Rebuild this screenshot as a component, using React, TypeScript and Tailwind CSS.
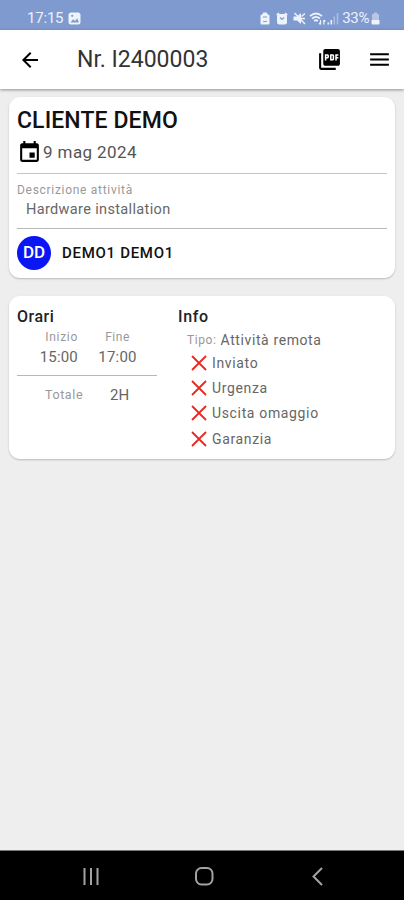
import React from 'react';
import { MdArrowBack, MdEvent, MdMenu, MdPictureAsPdf } from 'react-icons/md';

const flags = ['Inviato', 'Urgenza', 'Uscita omaggio', 'Garanzia'];

const StatusBar: React.FC = () => (
    <div className="h-[30px] shrink-0 bg-[#7f9acf] text-[#edf2fc] flex items-center pl-[27px] pr-[24px] pt-[7px]">
        <span className="text-[15px] leading-none tracking-[-0.2px]">17:15</span>
        <svg className="w-[13px] h-[13px] ml-[5px]" viewBox="0 0 13 13">
            <rect x="0.5" y="0.5" width="12" height="12" rx="2.5" fill="currentColor" />
            <path d="M2.5 10.5l2.6-3.2 2 1.7 2.2-2.8 1.6 4.3z" fill="#7f9acf" />
            <circle cx="4.2" cy="3.8" r="1.1" fill="#7f9acf" />
        </svg>

        <div className="ml-auto flex items-center">
            {/* Risparmio, sveglia, muto */}
            <svg className="w-[10px] h-[13px]" viewBox="0 0 10 13">
                <path d="M3 0.5h4v1l2.500 2v8q0 1-1 1h-7q-1 0-1-1v-8l2.500-2z" fill="currentColor" />
                <path d="M3 5h4M3.200 9.500h3.600" stroke="#7f9acf" />
            </svg>
            <svg className="w-[12px] h-[13px] ml-[6px]" viewBox="0 0 12 13">
                <path d="M0.8 3.2l2.2-2M11.2 3.2l-2.2-2" stroke="currentColor" strokeWidth="1.6" />
                <rect x="1" y="2" width="10" height="10.5" rx="2.5" fill="currentColor" />
                <path d="M4 5.5l2 2 2.2-2.2" fill="none" stroke="#7f9acf" strokeWidth="1.2" />
            </svg>
            <svg className="w-[13px] h-[13px] ml-[5px]" viewBox="0 0 13 13">
                <path d="M0.5 4.500h3.500l4-3.500v11l-4-3.500h-3.500z" fill="currentColor" />
                <path d="M1.5 1l10.500 11M8 6.500h4M8.500 4.500l3.500-3" stroke="currentColor" strokeWidth="1.5" />
            </svg>
            <svg className="w-[17px] h-[13px] ml-[3px]" viewBox="0 0 17 13" fill="none" stroke="currentColor" strokeWidth="1.7">
                <path d="M1 4.2q6-5.4 12 0M3 6.7q4-3.5 8 0M5.2 9q1.8-1.5 3.6 0" />
                <path d="M11.5 8v4.5M10 11l1.5 1.5M14.8 12.5v-4.5M16.3 9.5l-1.5-1.5" strokeWidth="1.2" />
            </svg>
            <svg className="w-[12px] h-[13px] ml-[1px]" viewBox="0 0 12 13" fill="currentColor">
                <path d="M0.5 10.5h1.6v2h-1.6zM3.5 8h1.6v4.5h-1.6z" />
                <path d="M6.5 4.5h1.6v8h-1.6zM9.7 1h1.6v11.5h-1.6z" opacity="0.4" />
            </svg>
            <span className="text-[15px] leading-none ml-[3px] tracking-[-0.4px]">33%</span>
            <svg className="w-[9px] h-[13px] ml-[2px]" viewBox="0 0 9 13" fill="currentColor">
                <path d="M2.8 0.5h3.4v1.5h1.8v6h-7v-6h1.8z" opacity="0.5" />
                <path d="M0.5 8h8v3.5q0 1-1 1h-6q-1 0-1-1z" />
            </svg>
        </div>
    </div>
);

const Cross: React.FC = () => (
    <svg className="w-[16px] h-[16px]" viewBox="0 0 16 16">
        <path d="M1 1l14 14M15 1l-14 14" stroke="#e8281e" strokeWidth="1.8" />
    </svg>
);

const App: React.FC = () => {
    return (
        <div className="w-[404px] h-[900px] flex flex-col bg-[#eeeeee] font-['Roboto',sans-serif] overflow-hidden whitespace-nowrap">
            <StatusBar />

            <header className="h-[59px] shrink-0 bg-white flex items-center pl-[18px] pr-[12px] shadow-[0_1px_3px_rgba(0,0,0,0.4)]">
                <MdArrowBack className="w-[24px] h-[24px] text-black" />
                <h1 className="ml-[35px] text-[23px] leading-none text-[#333333]">Nr. I2400003</h1>
                <MdPictureAsPdf className="ml-auto w-[25px] h-[25px] text-black" />
                <MdMenu className="ml-[25px] w-[25px] h-[25px] text-black" />
            </header>

            <main className="flex-1 px-[9px] pt-[8px]">
                <section className="h-[181px] bg-white rounded-[11px] px-[8px] pt-[10px] shadow-[0_1px_2px_rgba(0,0,0,0.22)]">
                    <h2 className="h-[28px] text-[23px] leading-[28px] font-medium text-[#111111] tracking-[0.1px]">CLIENTE DEMO</h2>
                    <div className="h-[39px] flex items-center border-b border-[#c4c4c4] pb-[4px]">
                        <MdEvent className="w-[25px] h-[25px] text-black" />
                        <span className="ml-px text-[17px] leading-none text-[#555555] tracking-[0.4px]">9 mag 2024</span>
                    </div>
                    <div className="h-[55px] border-b border-[#b8b8b8] pt-[9px] pr-px">
                        <div className="text-[12px] leading-[15px] text-[#999999] tracking-[0.7px]">Descrizione attività</div>
                        <div className="pl-[9px] pt-[2px] text-[14.5px] leading-[20px] text-[#666666] tracking-[0.35px]">Hardware installation</div>
                    </div>
                    <div className="flex items-center pt-[7px]">
                        <div className="w-[34px] h-[34px] rounded-full bg-[#0b16f5] text-white text-[17px] font-medium flex items-center justify-center">DD</div>
                        <span className="ml-[11px] pt-px text-[15px] font-medium text-[#111111] tracking-[0.7px]">DEMO1 DEMO1</span>
                    </div>
                </section>

                <section className="mt-[18px] h-[163px] bg-white rounded-[11px] px-[8px] pt-[10px] flex shadow-[0_1px_2px_rgba(0,0,0,0.22)]">
                    <div className="w-[140px]">
                        <h3 className="text-[16px] leading-[21px] font-medium text-[#222222] tracking-[0.5px]">Orari</h3>
                        <div className="flex h-[49px] border-b border-[#b8b8b8] pt-[3px]">
                            <div className="ml-[22px] w-[39px] flex flex-col items-end">
                                <span className="text-[12px] leading-[15px] text-[#999999] tracking-[0.7px]">Inizio</span>
                                <span className="mt-[3px] text-[15px] leading-[18px] text-[#666666] tracking-[0.2px]">15:00</span>
                            </div>
                            <div className="ml-[19px] w-[41px] flex flex-col items-center">
                                <span className="text-[12px] leading-[15px] text-[#999999] tracking-[0.5px]">Fine</span>
                                <span className="mt-[3px] text-[15px] leading-[18px] text-[#666666] tracking-[0.2px]">17:00</span>
                            </div>
                        </div>
                        <div className="flex items-center h-[39px]">
                            <span className="ml-[28px] w-[65px] text-[12.5px] text-[#999999] tracking-[0.6px]">Totale</span>
                            <span className="text-[15px] text-[#666666]">2H</span>
                        </div>
                    </div>

                    <div className="ml-[21px]">
                        <h3 className="text-[16px] leading-[21px] font-medium text-[#222222] tracking-[0.6px]">Info</h3>
                        <div className="flex items-center ml-[9px] mt-[5px] h-[16px]">
                            <span className="text-[12px] text-[#999999] tracking-[0.6px]">Tipo:</span>
                            <span className="ml-[4px] text-[14px] text-[#666666] tracking-[0.6px]">Attività remota</span>
                        </div>
                        <ul className="ml-[13px] mt-[2px]">
                            {flags.map((flag) => (
                                <li key={flag} className="h-[25.4px] flex items-center">
                                    <Cross />
                                    <span className="ml-[5px] text-[14px] leading-none text-[#666666] tracking-[0.65px]">{flag}</span>
                                </li>
                            ))}
                        </ul>
                    </div>
                </section>
            </main>

            {/* Barra di navigazione */}
            <nav className="h-[50px] shrink-0 bg-black border-t border-[#777777] text-[#a3a3a3]">
                <svg className="w-[404px] h-[49px]" viewBox="0 0 404 49" fill="none" stroke="currentColor" strokeWidth="2">
                    <path d="M84.5 17v17M91 17v17M97.500 17v17" />
                    <rect x="196" y="17" width="16.500" height="16.500" rx="5.500" />
                    <path d="M322 17l-8.500 8.500 8.500 8.500" />
                </svg>
            </nav>
        </div>
    );
};

export default App;
